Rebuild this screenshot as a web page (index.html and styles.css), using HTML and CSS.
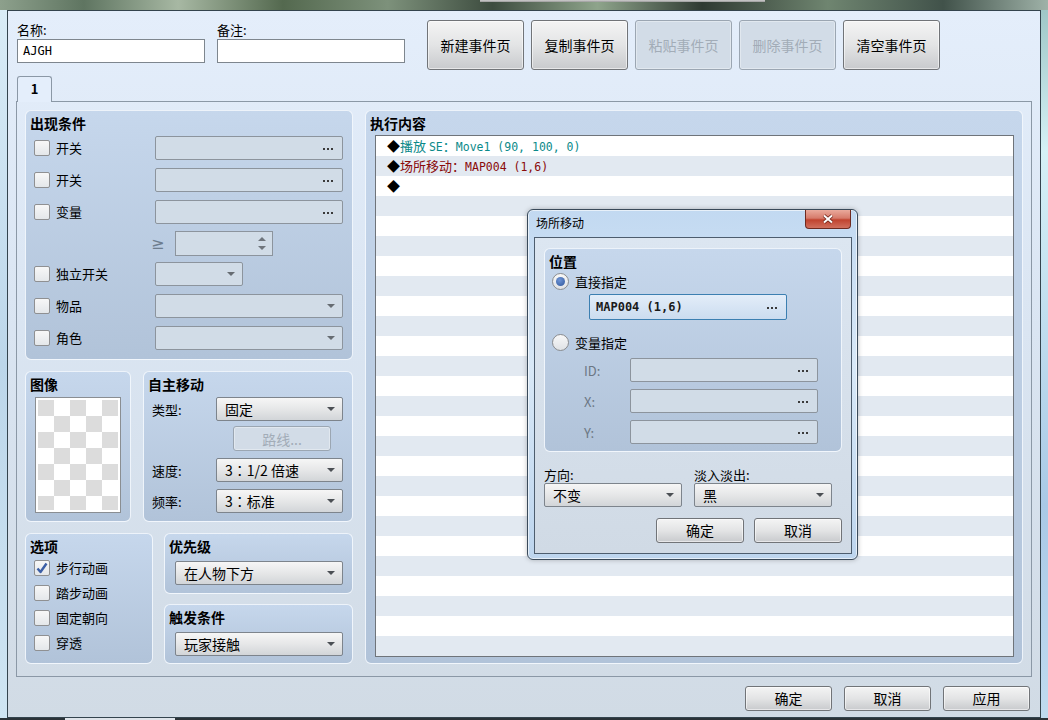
FILE: index.html
```html
<!DOCTYPE html>
<html lang="zh-CN">
<head>
    <meta charset="UTF-8">
    <meta name="viewport" content="width=device-width, initial-scale=1.0">
    <title>事件编辑</title>
    <link rel="stylesheet" href="styles.css">
</head>
<body>
<div class="window">
    <div class="glass"></div>
    <div class="frame">
        <div class="edge"></div>
        <div class="content">
            <div class="top">
                <div class="field">
                    <div class="lbl">名称:</div>
                    <div class="text-input">AJGH</div>
                </div>
                <div class="field">
                    <div class="lbl">备注:</div>
                    <div class="text-input"></div>
                </div>
                <div class="page-buttons">
                    <button class="btn big">新建事件页</button>
                    <button class="btn big">复制事件页</button>
                    <button class="btn big" disabled>粘贴事件页</button>
                    <button class="btn big" disabled>删除事件页</button>
                    <button class="btn big">清空事件页</button>
                </div>
            </div>

            <div class="tabs"><div class="tab">1</div></div>

            <div class="panel">
                <div class="left-col">
                    <div class="grp cond">
                        <div class="grp-title">出现条件</div>
                        <div class="cond-rows">
                            <div class="row">
                                <div class="chk"><span class="box"></span>开关</div>
                                <div class="inp dis"><span class="dots"></span></div>
                            </div>
                            <div class="row">
                                <div class="chk"><span class="box"></span>开关</div>
                                <div class="inp dis"><span class="dots"></span></div>
                            </div>
                            <div class="row">
                                <div class="chk"><span class="box"></span>变量</div>
                                <div class="inp dis"><span class="dots"></span></div>
                            </div>
                            <div class="row shift">
                                <div></div>
                                <div class="spin-cell">
                                    <span class="ge">≥</span>
                                    <div class="spin dis">
                                        <span class="spin-arrows"><i class="up"></i><i class="down"></i></span>
                                    </div>
                                </div>
                            </div>
                            <div class="row shift">
                                <div class="chk"><span class="box"></span>独立开关</div>
                                <div class="dd dis short"><span class="arrow"></span></div>
                            </div>
                            <div class="row">
                                <div class="chk"><span class="box"></span>物品</div>
                                <div class="dd dis"><span class="arrow"></span></div>
                            </div>
                            <div class="row">
                                <div class="chk"><span class="box"></span>角色</div>
                                <div class="dd dis"><span class="arrow"></span></div>
                            </div>
                        </div>
                    </div>

                    <div class="row2">
                        <div class="grp img">
                            <div class="grp-title">图像</div>
                            <div class="imgbox"><div class="checker"></div></div>
                        </div>
                        <div class="grp move">
                            <div class="grp-title">自主移动</div>
                            <div class="move-body">
                                <div class="frow">
                                    <span>类型:</span>
                                    <div class="dd">固定<span class="arrow"></span></div>
                                </div>
                                <button class="btn route" disabled>路线...</button>
                                <div class="frow gap">
                                    <span>速度:</span>
                                    <div class="dd">3<span class="colon">：</span>1/2 倍速<span class="arrow"></span></div>
                                </div>
                                <div class="frow">
                                    <span>频率:</span>
                                    <div class="dd">3<span class="colon">：</span>标准<span class="arrow"></span></div>
                                </div>
                            </div>
                        </div>
                    </div>

                    <div class="row3">
                        <div class="grp opts">
                            <div class="grp-title">选项</div>
                            <div class="opt-list">
                                <div class="chk opt"><span class="box">
                                    <svg width="14" height="14" viewBox="0 0 14 14"><path d="M2.5 7.5 L5.5 11 L11.5 2.5" fill="none" stroke="#3c5fa6" stroke-width="2.4" stroke-linejoin="round"/></svg>
                                </span>步行动画</div>
                                <div class="chk opt"><span class="box"></span>踏步动画</div>
                                <div class="chk opt"><span class="box"></span>固定朝向</div>
                                <div class="chk opt"><span class="box"></span>穿透</div>
                            </div>
                        </div>
                        <div class="stack">
                            <div class="grp prio">
                                <div class="grp-title">优先级</div>
                                <div class="dd-wrap"><div class="dd">在人物下方<span class="arrow"></span></div></div>
                            </div>
                            <div class="grp trig">
                                <div class="grp-title">触发条件</div>
                                <div class="dd-wrap"><div class="dd">玩家接触<span class="arrow"></span></div></div>
                            </div>
                        </div>
                    </div>
                </div>

                <div class="grp exec">
                    <div class="grp-title">执行内容</div>
                    <div class="list">
                        <div class="line"><span class="dia">◆</span><span class="teal">播放 <span class="mono">SE</span><span class="colon">：</span><span class="mono">Move1 (90, 100, 0)</span></span></div>
                        <div class="line"><span class="dia">◆</span><span class="red">场所移动<span class="colon">：</span><span class="mono">MAP004 (1,6)</span></span></div>
                        <div class="line"><span class="dia">◆</span></div>
                    </div>
                </div>
            </div>

            <div class="bottom-buttons">
                <button class="btn foot">确定</button>
                <button class="btn foot">取消</button>
                <button class="btn foot">应用</button>
            </div>
        </div>
        <div class="edge right"></div>
    </div>
    <div class="bottom-strip"></div>

    <!-- transfer dialog floating over the list -->
    <div class="dialog">
        <div class="dlg-bar">
            <span>场所移动</span>
            <span class="close">
                <svg width="12" height="10" viewBox="0 0 12 10">
                    <path d="M2 1.5 L10 8.5 M10 1.5 L2 8.5" stroke="#6b1f14" stroke-width="3.6"/>
                    <path d="M2 1.5 L10 8.5 M10 1.5 L2 8.5" stroke="#fff" stroke-width="2"/>
                </svg>
            </span>
        </div>
        <div class="dlg-client">
            <div class="grp pos">
                <div class="grp-title">位置</div>
                <div class="pos-body">
                    <div class="radio-row"><span class="radio on"></span>直接指定</div>
                    <div class="map-inp"><span>MAP004 (1,6)</span><span class="dots"></span></div>
                    <div class="radio-row second"><span class="radio"></span>变量指定</div>
                    <div class="var-row"><span class="var-lbl">ID:</span><div class="inp dis"><span class="dots"></span></div></div>
                    <div class="var-row"><span class="var-lbl">X:</span><div class="inp dis"><span class="dots"></span></div></div>
                    <div class="var-row"><span class="var-lbl">Y:</span><div class="inp dis"><span class="dots"></span></div></div>
                </div>
            </div>
            <div class="dlg-opts">
                <div class="dlg-col">
                    <div class="dlg-lbl">方向:</div>
                    <div class="dd">不变<span class="arrow"></span></div>
                </div>
                <div class="dlg-col">
                    <div class="dlg-lbl">淡入淡出:</div>
                    <div class="dd">黑<span class="arrow"></span></div>
                </div>
            </div>
            <div class="dlg-buttons">
                <button class="btn foot">确定</button>
                <button class="btn foot">取消</button>
            </div>
        </div>
    </div>
</div>
</body>
</html>
```

FILE: styles.css
```css
* {
    box-sizing: border-box;
}
html, body {
    margin: 0;
    padding: 0;
}
body {
    width: 1048px;
    height: 720px;
    overflow: hidden;
    font-family: "Noto Sans CJK SC", "Noto Sans", sans-serif;
    font-size: 13px;
    color: #000;
    background: #2b3338;
}
.window {
    position: relative;
    width: 1048px;
    height: 720px;
}
.glass {
    height: 10px;
    background:
        linear-gradient(#cfcfcf, #9a9a9a) no-repeat 480px 0 / 285px 2px,
        linear-gradient(90deg, #8da08c 0, #5f7561 8%, #a7b8a3 17%, #54694f 27%, #7d917b 37%, #3d4c3f 47%, #8ea48b 57%, #2f3a32 67%, #6f8570 79%, #41524a 90%, #9fb2a8 100%);
}
.frame {
    display: flex;
    height: 708px;
}
.edge {
    width: 7px;
    background: linear-gradient(#d9ecf7, #bcd6ea 50%, #cfe5f3);
}
.edge.right {
    background: linear-gradient(#9fc7c7, #d5f1f6 20%, #a9c9e6 70%, #c0dbef);
}
.content {
    flex: 1;
    border: 1px solid #34444e;
    background: linear-gradient(#e4eefb, #dae5f2 45%, #d1dbe5);
    display: flex;
    flex-direction: column;
}
.bottom-strip {
    height: 2px;
    background: linear-gradient(90deg, #2b3338 65px, #dfe4ea 65px 175px, #2b3338 175px);
}

/* top row */
.top {
    display: flex;
    align-items: flex-start;
    padding: 9px 0 0 9px;
}
.field {
    width: 188px;
    margin-right: 12px;
}
.lbl {
    height: 19px;
    line-height: 19px;
}
.text-input {
    height: 24px;
    border: 1px solid #7e868e;
    background: #fff;
    font-family: "DejaVu Sans Mono", monospace;
    font-size: 12px;
    line-height: 22px;
    padding-left: 5px;
}
.page-buttons {
    display: flex;
    gap: 7px;
    margin-left: 10px;
}
.btn {
    font-family: "Noto Sans CJK SC", sans-serif;
    font-size: 14px;
    color: #000;
    padding: 0;
    border: 1px solid #717478;
    border-radius: 3px;
    background: linear-gradient(#f4f4f4, #e3e4e5 50%, #c8cacd);
    box-shadow: inset 0 0 0 1px rgba(255, 255, 255, 0.55);
}
.btn:disabled {
    color: #a2acb7;
    border-color: #9ba6b2;
    background: #d2dce7;
    box-shadow: inset 0 0 0 1px rgba(255, 255, 255, 0.35);
}
.btn.big {
    width: 97px;
    height: 50px;
}

/* tab + panel */
.tabs {
    display: flex;
    margin-top: 6px;
    padding-left: 9px;
    height: 25px;
    position: relative;
    z-index: 1;
}
.tab {
    width: 35px;
    height: 26px;
    border: 1px solid #8b98a6;
    border-bottom: none;
    border-radius: 3px 3px 0 0;
    background: #e4eefb;
    text-align: center;
    font-weight: bold;
    line-height: 24px;
}
.panel {
    margin: 0 8px;
    height: 576px;
    border: 1px solid #8b98a6;
    padding: 8px 8px 0 8px;
    display: grid;
    grid-template-columns: 328px 1fr;
    gap: 12px;
    align-items: start;
}
.left-col {
    display: flex;
    flex-direction: column;
    gap: 11px;
}

/* group boxes */
.grp {
    border: 1px solid rgba(248, 251, 255, 0.85);
    border-radius: 6px;
    background: linear-gradient(#c6d7ec, #b1c3d9);
    padding: 4px 9px 0 4px;
}
.grp-title {
    font-weight: bold;
    font-size: 14px;
    line-height: 16px;
    height: 16px;
}
.cond {
    height: 250px;
}
.cond-rows {
    padding: 5px 0 0 4px;
    display: flex;
    flex-direction: column;
    gap: 8px;
}
.row {
    display: grid;
    grid-template-columns: 121px 188px;
    align-items: center;
    height: 24px;
}
.row.shift {
    margin-top: -1px;
}
.chk {
    display: flex;
    align-items: center;
    gap: 6px;
    line-height: 16px;
}
.box {
    width: 16px;
    height: 16px;
    flex-shrink: 0;
    border: 1px solid #8f9092;
    border-radius: 2px;
    background: linear-gradient(#f7f7f7, #e4e7ea);
    display: flex;
    align-items: center;
    justify-content: center;
}
.inp {
    height: 24px;
    border: 1px solid #8c949d;
    border-radius: 2px;
    display: flex;
    align-items: center;
    justify-content: flex-end;
    padding-right: 9px;
}
.dis {
    background: #d1dce7;
}
.dots {
    width: 10px;
    height: 2px;
    margin-top: 1px;
    background: linear-gradient(90deg, #3a3a3a 2px, transparent 2px) 0 0 / 4px 2px;
}
.spin-cell {
    display: flex;
    align-items: center;
    margin-left: -4px;
}
.ge {
    width: 24px;
    color: #6d7d8e;
    font-family: "DejaVu Sans", sans-serif;
    font-size: 16px;
    line-height: 18px;
}
.spin {
    width: 98px;
    height: 25px;
    border: 1px solid #8c949d;
    display: flex;
    justify-content: flex-end;
    align-items: center;
    padding-right: 6px;
}
.spin-arrows {
    display: flex;
    flex-direction: column;
    gap: 5px;
}
.spin-arrows i {
    width: 0;
    height: 0;
    border-left: 4px solid transparent;
    border-right: 4px solid transparent;
}
.spin-arrows .up {
    border-bottom: 4px solid #6f757c;
}
.spin-arrows .down {
    border-top: 4px solid #6f757c;
}

/* dropdowns */
.dd {
    height: 24px;
    border: 1px solid #7d848c;
    border-radius: 2px;
    background: linear-gradient(#f6f6f6, #e6e7e8 50%, #d2d5d8);
    display: flex;
    align-items: center;
    padding: 0 7px 0 8px;
    font-size: 14px;
    line-height: 20px;
}
.dd.dis {
    background: #d1dce7;
    border-color: #8c949d;
}
.dd.short {
    width: 88px;
}
.arrow {
    margin-left: auto;
    width: 0;
    height: 0;
    border-left: 4px solid transparent;
    border-right: 4px solid transparent;
    border-top: 4px solid #4b4f54;
}
.dd.dis .arrow {
    border-top-color: #666c72;
}
.colon {
    font-family: "Noto Sans CJK JP", sans-serif;
}

/* image + movement */
.row2 {
    display: flex;
    gap: 12px;
    height: 151px;
}
.img {
    width: 106px;
}
.imgbox {
    margin: 5px 0 0 5px;
    width: 86px;
    height: 116px;
    border: 1px solid #8a8e92;
    background: #fff;
    padding: 2px;
}
.checker {
    width: 100%;
    height: 100%;
    background: conic-gradient(#fff 0 25%, #dcdcdc 0 50%, #fff 0 75%, #dcdcdc 0) 0 0 / 32px 32px;
}
.move {
    width: 210px;
}
.move-body {
    padding: 5px 0 0 4px;
}
.frow {
    display: grid;
    grid-template-columns: 64px 127px;
    align-items: center;
    height: 24px;
}
.frow.gap {
    margin-bottom: 7px;
}
.btn.route {
    width: 98px;
    height: 25px;
    margin: 5px 0 7px 81px;
    display: block;
}

/* options, priority, trigger */
.row3 {
    display: flex;
    gap: 11px;
    height: 131px;
}
.opts {
    width: 128px;
}
.opt-list {
    padding: 4px 0 0 4px;
}
.opt {
    height: 20px;
    margin-bottom: 5px;
}
.stack {
    width: 189px;
    display: flex;
    flex-direction: column;
    gap: 10px;
}
.prio {
    height: 61px;
}
.trig {
    height: 60px;
}
.dd-wrap {
    padding: 7px 0 0 6px;
}

/* command list */
.exec {
    height: 554px;
    padding-right: 8px;
}
.list {
    margin: 4px 0 0 5px;
    height: 522px;
    border: 1px solid #6f747a;
    background: repeating-linear-gradient(#fff 0 20px, #e2e9f1 20px 40px);
}
.line {
    height: 20px;
    line-height: 20px;
    padding-left: 11px;
    white-space: pre;
}
.teal {
    color: #0b8a8a;
}
.red {
    color: #8a0a0a;
}
.mono {
    font-family: "DejaVu Sans Mono", monospace;
    font-size: 11.5px;
}

/* footer */
.bottom-buttons {
    display: flex;
    justify-content: flex-end;
    gap: 12px;
    padding: 9px 10px 0 0;
}
.btn.foot {
    width: 87px;
    height: 25px;
    line-height: 21px;
}

/* dialog */
.dialog {
    position: absolute;
    left: 527px;
    top: 209px;
    width: 331px;
    height: 351px;
    border: 1px solid #3a4a5a;
    border-radius: 6px;
    background: linear-gradient(#c2d9f1, #d8e8f7 45%, #bdd5ee);
    box-shadow: inset 0 0 0 1px rgba(255, 255, 255, 0.6), 0 0 5px rgba(0, 0, 0, 0.25);
}
.dlg-bar {
    height: 27px;
    display: flex;
    align-items: flex-start;
    padding-left: 8px;
    font-size: 12px;
    line-height: 26px;
}
.close {
    margin-left: auto;
    margin-right: 6px;
    width: 46px;
    height: 19px;
    border: 1px solid #6e2a20;
    border-top: none;
    border-radius: 0 0 4px 4px;
    background: linear-gradient(#eaaa9c, #d67b6b 45%, #c0432f 55%, #d0705e);
    display: flex;
    align-items: center;
    justify-content: center;
}
.dlg-client {
    margin: 0 5px 0 6px;
    height: 317px;
    border: 1px solid #4d5d6e;
    background: linear-gradient(#dce6f1, #d0dae5);
    padding: 10px 9px 0 9px;
}
.pos {
    height: 204px;
}
.pos-body {
    padding: 3px 0 0 3px;
}
.radio-row {
    display: flex;
    align-items: center;
    gap: 6px;
    height: 18px;
}
.radio-row.second {
    margin-top: 13px;
}
.radio {
    width: 17px;
    height: 17px;
    border-radius: 50%;
    border: 1px solid #8a8c8f;
    background: linear-gradient(#f8f8f8, #dfe2e6);
    display: flex;
    align-items: center;
    justify-content: center;
}
.radio.on::after {
    content: "";
    width: 9px;
    height: 9px;
    border-radius: 50%;
    background: radial-gradient(circle at 40% 35%, #6f95d6, #2f569b);
}
.map-inp {
    margin: 4px 0 0 37px;
    width: 198px;
    height: 26px;
    border: 1px solid #3c7fb1;
    border-radius: 2px;
    background: linear-gradient(#e3edf9, #cbdcef);
    display: flex;
    align-items: center;
    justify-content: space-between;
    padding: 0 9px 0 6px;
    font-family: "DejaVu Sans Mono", monospace;
    font-size: 12px;
    font-weight: bold;
    color: #1a1a1a;
}
.var-row {
    display: grid;
    grid-template-columns: 47px 188px;
    align-items: center;
    margin: 7px 0 0 31px;
}
.var-row .inp {
    height: 24px;
}
.var-lbl {
    color: #6c7784;
    padding-left: 1px;
}
.dlg-opts {
    display: flex;
    gap: 12px;
    margin-top: 15px;
}
.dlg-col {
    width: 138px;
}
.dlg-lbl {
    height: 16px;
    line-height: 16px;
}
.dlg-buttons {
    display: flex;
    justify-content: flex-end;
    gap: 10px;
    margin-top: 11px;
}
.dlg-buttons .btn.foot {
    width: 88px;
}
```
